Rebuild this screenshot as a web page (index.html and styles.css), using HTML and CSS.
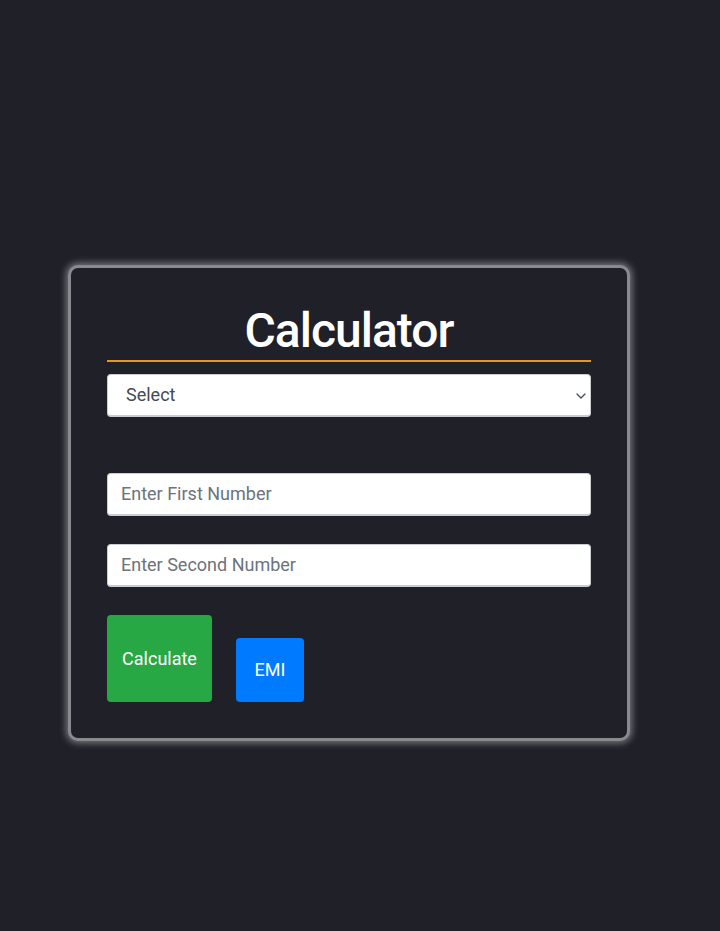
FILE: index.html
```html
<!DOCTYPE html>
<html lang="en">
<head>
<meta charset="utf-8">
<title>Calculator</title>
<link rel="stylesheet" href="styles.css">
</head>
<body>
<div class="page">
  <div class="card">
    <h1 class="title">Calculator</h1>
    <div class="select-wrap">
      <select class="select">
        <option>Select</option>
        <option>Add</option>
        <option>Subtract</option>
        <option>Multiply</option>
        <option>Divide</option>
      </select>
      <svg class="chevron" width="10" height="6" viewBox="0 0 10 6" aria-hidden="true">
        <path d="M1 1 L5 5 L9 1" fill="none" stroke="#444a52" stroke-width="1.3" stroke-linecap="round" stroke-linejoin="round"/>
      </svg>
    </div>
    <input class="field field-first" type="text" placeholder="Enter First Number">
    <input class="field field-second" type="text" placeholder="Enter Second Number">
    <div class="actions">
      <button class="btn btn-calc">Calculate</button>
      <button class="btn btn-emi">EMI</button>
    </div>
  </div>
</div>
</body>
</html>
```
FILE: styles.css
```css
html, body {
  margin: 0;
  padding: 0;
  background: #1f2028;
  font-family: Roboto, "Liberation Sans", sans-serif;
}
.page {
  padding: 265px 0 0 68px;
  min-height: 931px;
  box-sizing: border-box;
}
.card {
  width: 562px;
  box-sizing: border-box;
  border: 3px solid #8a8a8e;
  border-radius: 10px;
  box-shadow: 0 0 7px 2px rgba(210, 210, 215, 0.5);
  background: #1f2028;
  padding: 34px 36px 36px 36px;
  display: flex;
  flex-direction: column;
}
.title {
  margin: 0;
  color: #ffffff;
  font-size: 48px;
  font-weight: 500;
  letter-spacing: -1px;
  line-height: 1.2;
  text-align: center;
  border-bottom: 2px solid #e39a1c;
}
.select-wrap {
  margin-top: 12px;
  position: relative;
}
.select {
  display: block;
  height: 43px;
  width: 100%;
  box-sizing: border-box;
  border: 1px solid #c9ccd1;
  border-bottom-width: 2px;
  border-radius: 4px;
  background: #ffffff;
  color: #444a52;
  font-family: Roboto, "Liberation Sans", sans-serif;
  font-size: 18px;
  padding: 0 30px 0 18px;
  -webkit-appearance: none;
  appearance: none;
  outline: none;
}
.chevron {
  position: absolute;
  right: 5px;
  top: 19px;
  pointer-events: none;
}
.field {
  display: block;
  height: 43px;
  width: 100%;
  box-sizing: border-box;
  border: 1px solid #c9ccd1;
  border-bottom-width: 2px;
  border-radius: 4px;
  background: #ffffff;
  color: #444a52;
  font-family: Roboto, "Liberation Sans", sans-serif;
  font-size: 18px;
  padding: 0 13px;
  outline: none;
}
.field::placeholder {
  color: #6c737b;
}
.field-first {
  margin-top: 56px;
}
.field-second {
  margin-top: 28px;
}
.actions {
  margin-top: 28px;
  display: flex;
  align-items: flex-end;
  gap: 24px;
}
.btn {
  border: none;
  border-radius: 4px;
  color: #ffffff;
  font-family: Roboto, "Liberation Sans", sans-serif;
  font-size: 18px;
  padding: 0;
  cursor: pointer;
}
.btn-calc {
  width: 105px;
  height: 87px;
  background: #28a745;
}
.btn-emi {
  width: 68px;
  height: 64px;
  background: #007bff;
}
```
